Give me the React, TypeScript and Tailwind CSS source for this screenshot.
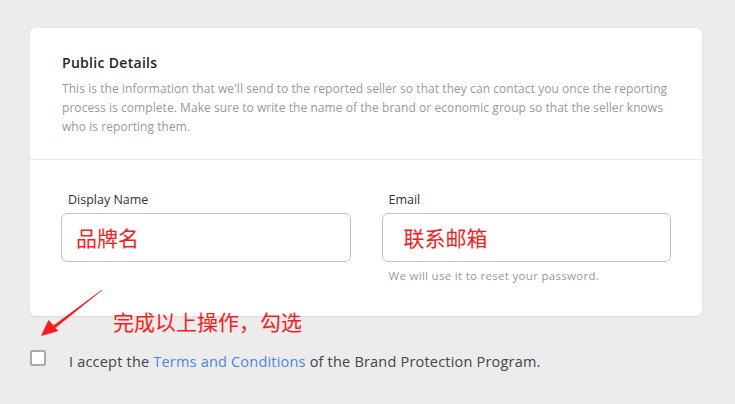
export default function App() {
  return (
    <div className="relative w-[735px] h-[404px] bg-[#ececec] px-[30px] pt-[28px] font-['Open_Sans','Liberation_Sans',sans-serif]">
      {/* Card */}
      <div className="w-[672px] bg-white rounded-[6px] shadow-[0_1px_2px_rgba(0,0,0,0.08)]">
        <div className="px-[32px] pt-[25px] pb-[23px] border-b border-[#ebebeb]">
          <h2 className="text-[14px] leading-[20px] font-semibold tracking-[0.3px] text-[#262626]">Public Details</h2>
          <p className="mt-[6px] text-[12px] leading-[19px] tracking-[0.06px] text-[#999999] whitespace-nowrap">
            This is the information that we'll send to the reported seller so that they can contact you once the reporting
            <br />
            process is complete. Make sure to write the name of the brand or economic group so that the seller knows
            <br />
            who is reporting them.
          </p>
        </div>
        <div className="grid grid-cols-2 gap-[31px] px-[31px] pt-[32px] pb-[32px]">
          <div>
            <label className="block pl-[7px] text-[12.5px] leading-[16px] text-[#333333]">Display Name</label>
            <div className="mt-[5px] h-[49px] flex items-center rounded-[6px] border border-[#c4c4c4] px-[14px]">
              <span className="text-[21px] text-[#ff1a1a] font-['Noto_Sans_CJK_SC',sans-serif]">品牌名</span>
            </div>
          </div>
          <div>
            <label className="block pl-[7px] text-[12.5px] leading-[16px] text-[#333333]">Email</label>
            <div className="mt-[5px] h-[49px] flex items-center rounded-[6px] border border-[#c4c4c4] px-[21px]">
              <span className="text-[21px] text-[#ff1a1a] font-['Noto_Sans_CJK_SC',sans-serif]">联系邮箱</span>
            </div>
            <p className="mt-[6px] pl-[7px] text-[11.5px] leading-[16px] tracking-[0.3px] text-[#999999]">We will use it to reset your password.</p>
          </div>
        </div>
      </div>

      {/* Terms */}
      <div className="mt-[34px] flex items-start">
        <span className="w-[16px] h-[16px] rounded-[2px] border-2 border-[#aaaaaa] bg-white" />
        <p className="ml-[23px] mt-[2px] text-[14.5px] leading-[20px] tracking-[0.2px] text-[#444444]">
          I accept the <span className="text-[#4a86e8]">Terms and Conditions</span> of the Brand Protection Program.
        </p>
      </div>

      {/* Annotation overlay */}
      <span className="absolute left-[113px] top-[307px] text-[21px] leading-[28px] text-[#ff1a1a] font-['Noto_Sans_CJK_SC',sans-serif]">
        完成以上操作，勾选
      </span>
      <svg className="absolute left-0 top-0 pointer-events-none" width="735" height="404" viewBox="0 0 735 404">
        <polygon
          fill="#ff1a1a"
          points="102.2,290.3 101.8,289.7 53.5,325.5 48.5,320 41,336 58.5,331 55.3,328"
        />
      </svg>
    </div>
  )
}
